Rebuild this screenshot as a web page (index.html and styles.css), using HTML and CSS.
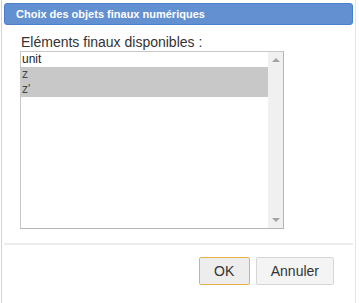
FILE: index.html
```html
<!DOCTYPE html>
<html lang="fr">
<head>
    <meta charset="UTF-8">
    <title>Choix des objets finaux numériques</title>
    <link rel="stylesheet" href="styles.css">
</head>
<body>

<div class="dialog">
    <div class="titlebar">Choix des objets finaux numériques</div>

    <div class="content">
        <div class="label">Eléments finaux disponibles :</div>
        <div class="listbox">
            <div class="items">
                <div class="item">unit</div>
                <div class="item selected">z</div>
                <div class="item selected">z'</div>
            </div>
            <div class="scrollbar">
                <span class="arrow up"></span>
                <span class="arrow down"></span>
            </div>
        </div>
    </div>

    <div class="buttons">
        <button class="btn default">OK</button>
        <button class="btn">Annuler</button>
    </div>
</div>

</body>
</html>
```

FILE: styles.css
```css
/* Fenetre de dialogue */
body {
    margin: 0;
    background-color: #fff;
    font-family: "Liberation Sans", Arial, sans-serif;
    color: #333;
}
.dialog {
    width: 355px;
    height: 303px;
    border-left: 1px solid #d4d4d4;
    border-right: 1px solid #e4e4e4;
    margin-left: 1px;
    box-sizing: border-box;
    padding: 3px 2px 0 2px;
}
.titlebar {
    height: 22px;
    box-sizing: border-box;
    background-color: #6390d0;
    border: 1px solid #4b7fcc;
    border-radius: 3px;
    color: #fff;
    font-weight: bold;
    font-size: 11px;
    line-height: 20px;
    padding-left: 11px;
}
.content {
    padding: 9px 0 0 16px;
    height: 220px;
    box-sizing: border-box;
    border-bottom: 2px solid #ececec;
}
.label {
    font-size: 14px;
    line-height: 16px;
    margin-left: 1px;
}
.listbox {
    display: flex;
    width: 264px;
    height: 178px;
    box-sizing: border-box;
    border: 1px solid #b4b4b4;
    border-top-color: #c8c8c8;
    border-left-color: #c8c8c8;
    margin-top: 1px;
}
.items {
    flex: 1;
}
.item {
    font-size: 12px;
    line-height: 15px;
    height: 15px;
    padding-left: 1px;
    color: #222;
}
.item.selected {
    background-color: #c8c8c8;
    color: #444;
}
.scrollbar {
    width: 15px;
    background-color: #f0f0f0;
    display: flex;
    flex-direction: column;
    justify-content: space-between;
    align-items: center;
    padding: 6px 0;
}
.arrow {
    width: 0;
    height: 0;
    border-left: 4px solid transparent;
    border-right: 4px solid transparent;
}
.arrow.up {
    border-bottom: 4px solid #a3a3a3;
}
.arrow.down {
    border-top: 4px solid #a3a3a3;
}
.buttons {
    display: flex;
    justify-content: flex-end;
    gap: 6px;
    padding: 12px 19px 0 0;
}
.btn {
    font-family: "Liberation Sans", Arial, sans-serif;
    font-size: 14px;
    color: #333;
    background-color: #f4f4f4;
    border: 1px solid #d6d6d6;
    border-radius: 2px;
    height: 28px;
    padding: 0 14px;
}
.btn.default {
    width: 51px;
    background-color: #ededed;
    border-color: #e9b04a;
}
```
